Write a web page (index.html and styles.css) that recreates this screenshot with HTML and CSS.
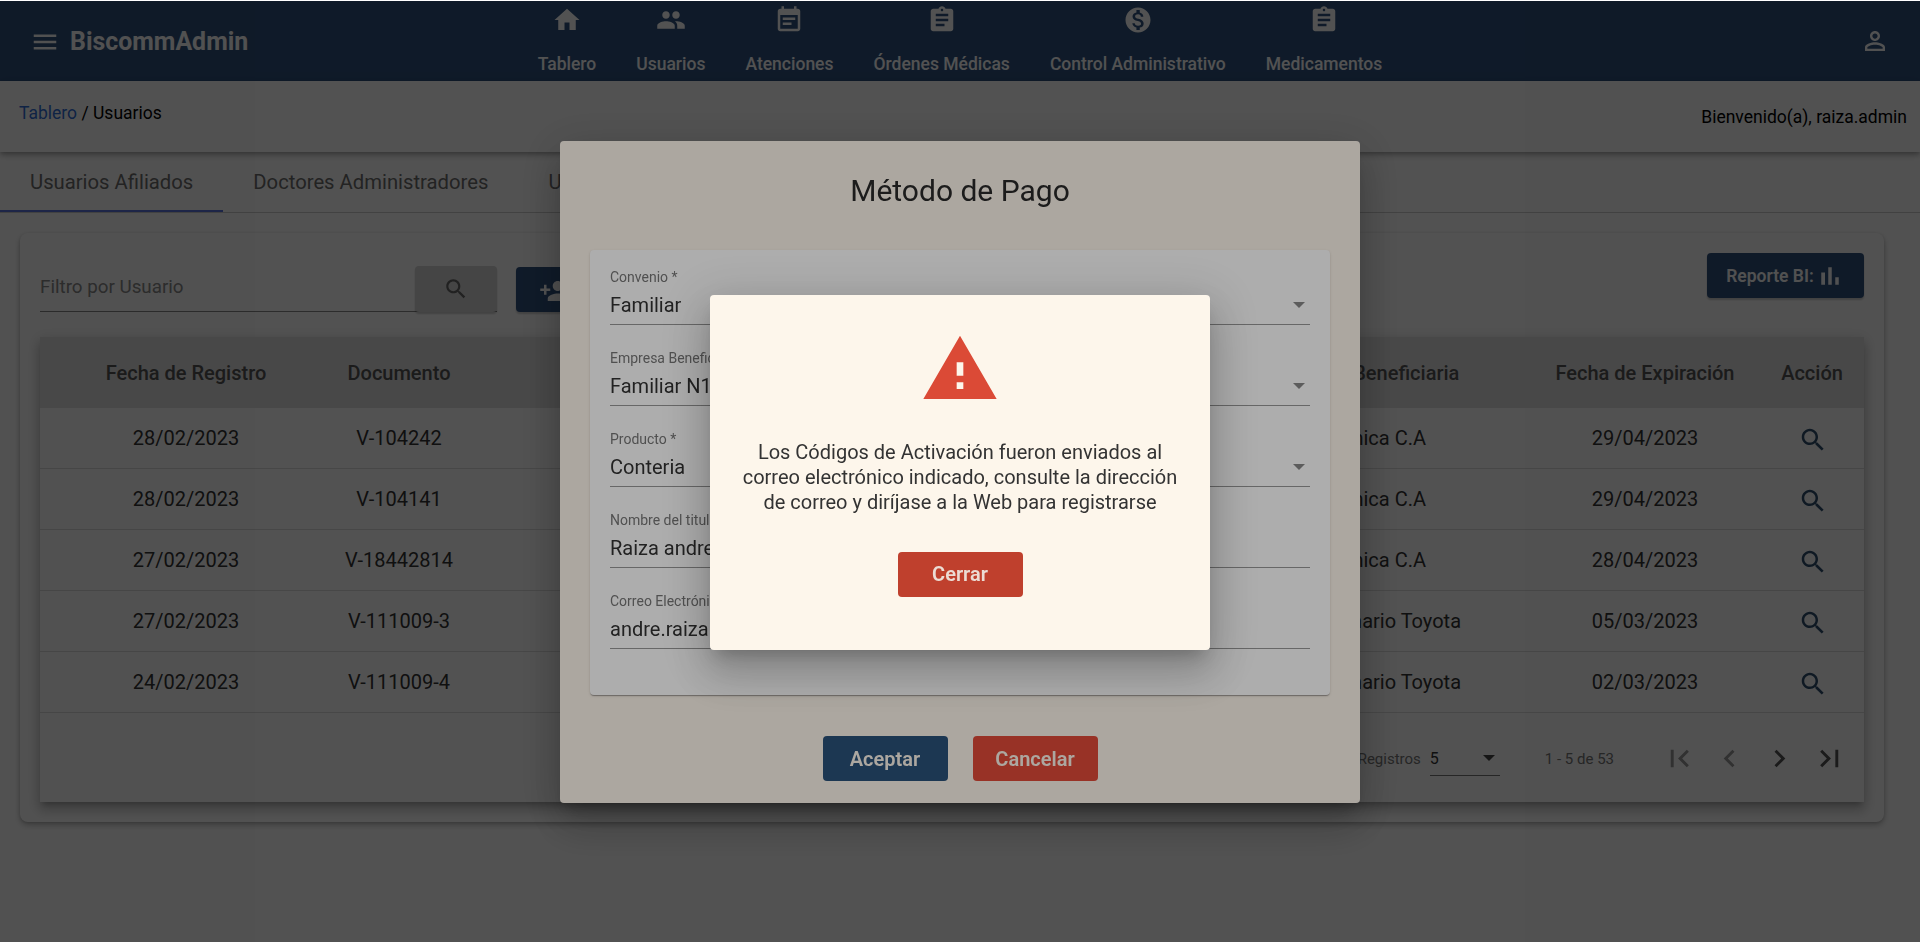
FILE: index.html
```html
<!DOCTYPE html>
<html lang="es">
<head>
<meta charset="utf-8">
<title>BiscommAdmin</title>
<link rel="stylesheet" href="styles.css">
</head>
<body>
<svg class="sprite" aria-hidden="true">
  <symbol id="i-menu" viewBox="0 0 24 24"><path d="M3 18h18v-2H3v2zm0-5h18v-2H3v2zm0-7v2h18V6H3z"/></symbol>
  <symbol id="i-home" viewBox="0 0 24 24"><path d="M10 20v-6h4v6h5v-8h3L12 3 2 12h3v8z"/></symbol>
  <symbol id="i-people" viewBox="0 0 24 24"><path d="M16 11c1.66 0 2.99-1.34 2.99-3S17.66 5 16 5c-1.66 0-3 1.34-3 3s1.34 3 3 3zm-8 0c1.66 0 2.99-1.34 2.99-3S9.66 5 8 5C6.34 5 5 6.34 5 8s1.34 3 3 3zm0 2c-2.33 0-7 1.17-7 3.5V19h14v-2.5c0-2.33-4.67-3.5-7-3.5zm8 0c-.29 0-.62.02-.97.05 1.16.84 1.97 1.97 1.97 3.45V19h6v-2.5c0-2.33-4.67-3.5-7-3.5z"/></symbol>
  <symbol id="i-event" viewBox="0 0 24 24"><path d="M17 10H7v2h10v-2zm2-7h-1V1h-2v2H8V1H6v2H5c-1.11 0-1.99.9-1.99 2L3 19c0 1.1.89 2 2 2h14c1.1 0 2-.9 2-2V5c0-1.1-.9-2-2-2zm0 16H5V8h14v11zm-5-5H7v2h7v-2z"/></symbol>
  <symbol id="i-assignment" viewBox="0 0 24 24"><path d="M19 3h-4.18C14.4 1.84 13.3 1 12 1c-1.3 0-2.4.84-2.82 2H5c-1.1 0-2 .9-2 2v14c0 1.1.9 2 2 2h14c1.1 0 2-.9 2-2V5c0-1.1-.9-2-2-2zm-7 0c.55 0 1 .45 1 1s-.45 1-1 1-1-.45-1-1 .45-1 1-1zm2 14H7v-2h7v2zm3-4H7v-2h10v2zm0-4H7V7h10v2z"/></symbol>
  <symbol id="i-money" viewBox="0 0 24 24"><path d="M12 2C6.48 2 2 6.48 2 12s4.48 10 10 10 10-4.48 10-10S17.52 2 12 2zm1.41 16.09V20h-2.67v-1.93c-1.71-.36-3.16-1.46-3.27-3.4h1.96c.1 1.05.82 1.87 2.65 1.87 1.96 0 2.4-.98 2.4-1.59 0-.83-.44-1.61-2.67-2.14-2.48-.6-4.18-1.62-4.18-3.67 0-1.72 1.39-2.84 3.11-3.21V4h2.67v1.95c1.86.45 2.79 1.86 2.85 3.39H14.3c-.05-1.11-.64-1.87-2.22-1.87-1.5 0-2.4.68-2.4 1.64 0 .84.65 1.39 2.67 1.91s4.18 1.39 4.18 3.91c-.01 1.83-1.38 2.83-3.12 3.16z"/></symbol>
  <symbol id="i-person" viewBox="0 0 24 24"><path d="M12 5.9c1.16 0 2.1.94 2.1 2.1s-.94 2.1-2.1 2.1S9.9 9.16 9.9 8s.94-2.1 2.1-2.1m0 9c2.97 0 6.1 1.46 6.1 2.1v1.1H5.9V17c0-.64 3.13-2.1 6.1-2.1M12 4C9.79 4 8 5.79 8 8s1.79 4 4 4 4-1.79 4-4-1.79-4-4-4zm0 9c-2.67 0-8 1.34-8 4v3h16v-3c0-2.66-5.33-4-8-4z"/></symbol>
  <symbol id="i-search" viewBox="0 0 24 24"><path d="M15.5 14h-.79l-.28-.27C15.41 12.59 16 11.11 16 9.5 16 5.91 13.09 3 9.5 3S3 5.91 3 9.5 5.91 16 9.5 16c1.61 0 3.09-.59 4.23-1.57l.27.28v.79l5 4.99L20.49 19l-4.99-5zm-6 0C7.01 14 5 11.99 5 9.5S7.01 5 9.5 5 14 7.01 14 9.5 11.99 14 9.5 14z"/></symbol>
  <symbol id="i-add" viewBox="0 0 24 24"><path d="M15 12c2.21 0 4-1.79 4-4s-1.79-4-4-4-4 1.79-4 4 1.79 4 4 4zm-9-2V7H4v3H1v2h3v3h2v-3h3v-2H6zm9 4c-2.67 0-8 1.34-8 4v2h16v-2c0-2.66-5.33-4-8-4z"/></symbol>
  <symbol id="i-bars" viewBox="0 0 24 24"><path d="M5 9.2h3V19H5zM10.6 5h2.8v14h-2.8zm5.6 8H19v6h-2.8z"/></symbol>
  <symbol id="i-first" viewBox="0 0 24 24"><path d="M18.41 16.59L13.82 12l4.59-4.59L17 6l-6 6 6 6zM6 6h2v12H6z"/></symbol>
  <symbol id="i-prev" viewBox="0 0 24 24"><path d="M15.41 7.41L14 6l-6 6 6 6 1.41-1.41L10.83 12z"/></symbol>
  <symbol id="i-next" viewBox="0 0 24 24"><path d="M10 6L8.59 7.41 13.17 12l-4.58 4.59L10 18l6-6z"/></symbol>
  <symbol id="i-last" viewBox="0 0 24 24"><path d="M5.59 7.41L10.18 12l-4.59 4.59L7 18l6-6-6-6zM16 6h2v12h-2z"/></symbol>
  <symbol id="i-warning" viewBox="0 0 24 24"><path d="M1 21h22L12 2 1 21zm12-3h-2v-2h2v2zm0-4h-2v-4h2v4z"/></symbol>
</svg>

<header class="topbar">
  <div class="brand">
    <svg class="icon brand-menu"><use href="#i-menu"/></svg>
    <span class="brand-name">BiscommAdmin</span>
  </div>
  <nav class="mainnav">
    <a class="navitem"><svg class="icon"><use href="#i-home"/></svg><span>Tablero</span></a>
    <a class="navitem"><svg class="icon"><use href="#i-people"/></svg><span>Usuarios</span></a>
    <a class="navitem"><svg class="icon"><use href="#i-event"/></svg><span>Atenciones</span></a>
    <a class="navitem"><svg class="icon"><use href="#i-assignment"/></svg><span>Órdenes Médicas</span></a>
    <a class="navitem"><svg class="icon"><use href="#i-money"/></svg><span>Control Administrativo</span></a>
    <a class="navitem"><svg class="icon"><use href="#i-assignment"/></svg><span>Medicamentos</span></a>
  </nav>
  <div class="account"><svg class="icon"><use href="#i-person"/></svg></div>
</header>

<div class="crumbbar">
  <div class="crumbs"><a class="crumb-link">Tablero</a> / Usuarios</div>
  <div class="welcome">Bienvenido(a), raiza.admin</div>
</div>

<div class="tabs">
  <div class="tab tab-active">Usuarios Afiliados</div>
  <div class="tab">Doctores Administradores</div>
  <div class="tab">Usuarios</div>
</div>

<main class="card">
  <div class="toolbar">
    <div class="toolbar-left">
      <div class="filter">
        <span class="filter-label">Filtro por Usuario</span>
        <button class="btn-search"><svg class="icon"><use href="#i-search"/></svg></button>
      </div>
      <button class="btn-add"><svg class="icon"><use href="#i-add"/></svg></button>
    </div>
    <button class="btn-report">Reporte BI: <svg class="icon"><use href="#i-bars"/></svg></button>
  </div>

  <div class="table">
    <div class="row row-head">
      <div>Fecha de Registro</div><div>Documento</div><div></div><div>Empresa Beneficiaria</div><div>Fecha de Expiración</div><div>Acción</div>
    </div>
    <div class="row">
      <div>28/02/2023</div><div>V-104242</div><div></div><div>Mecánica C.A</div><div>29/04/2023</div><div><svg class="icon row-search"><use href="#i-search"/></svg></div>
    </div>
    <div class="row">
      <div>28/02/2023</div><div>V-104141</div><div></div><div>Mecánica C.A</div><div>29/04/2023</div><div><svg class="icon row-search"><use href="#i-search"/></svg></div>
    </div>
    <div class="row">
      <div>27/02/2023</div><div>V-18442814</div><div></div><div>Mecánica C.A</div><div>28/04/2023</div><div><svg class="icon row-search"><use href="#i-search"/></svg></div>
    </div>
    <div class="row">
      <div>27/02/2023</div><div>V-111009-3</div><div></div><div>Concesionario Toyota</div><div>05/03/2023</div><div><svg class="icon row-search"><use href="#i-search"/></svg></div>
    </div>
    <div class="row">
      <div>24/02/2023</div><div>V-111009-4</div><div></div><div>Concesionario Toyota</div><div>02/03/2023</div><div><svg class="icon row-search"><use href="#i-search"/></svg></div>
    </div>
    <div class="paginator">
      <span class="page-label">Registros</span>
      <div class="page-select"><span>5</span><i class="caret caret-dark"></i></div>
      <span class="page-range">1 - 5 de 53</span>
      <svg class="icon page-btn page-off"><use href="#i-first"/></svg>
      <svg class="icon page-btn page-off"><use href="#i-prev"/></svg>
      <svg class="icon page-btn"><use href="#i-next"/></svg>
      <svg class="icon page-btn"><use href="#i-last"/></svg>
    </div>
  </div>
</main>

<div class="overlay overlay-first">
  <section class="dialog-pay">
    <h2 class="dialog-title">Método de Pago</h2>
    <div class="form-card">
      <div class="field"><label>Convenio *</label><div class="value">Familiar<i class="caret"></i></div></div>
      <div class="field"><label>Empresa Beneficiaria *</label><div class="value">Familiar N1<i class="caret"></i></div></div>
      <div class="field"><label>Producto *</label><div class="value">Conteria<i class="caret"></i></div></div>
      <div class="field"><label>Nombre del titular *</label><div class="value">Raiza andre</div></div>
      <div class="field"><label>Correo Electrónico *</label><div class="value">andre.raiza</div></div>
    </div>
    <div class="dialog-actions">
      <button class="btn btn-accept">Aceptar</button>
      <button class="btn btn-cancel">Cancelar</button>
    </div>
  </section>
</div>

<div class="overlay overlay-second">
  <section class="dialog-alert">
    <svg class="icon alert-icon"><use href="#i-warning"/></svg>
    <p class="alert-text">Los Códigos de Activación fueron enviados al correo electrónico indicado, consulte la dirección de correo y diríjase a la Web para registrarse</p>
    <button class="btn btn-close">Cerrar</button>
  </section>
</div>
</body>
</html>
```

FILE: styles.css
```css
* { box-sizing: border-box; }
html, body { margin: 0; height: 100%; overflow: hidden; }
body {
  padding-top: 1px;
  background: #fff;
  font-family: Roboto, "Liberation Sans", sans-serif;
  font-size: 17.5px;
  color: #333;
}
.sprite { display: none; }
.icon { display: block; width: 30px; height: 30px; fill: currentColor; flex: none; }
button { font-family: inherit; border: 0; cursor: pointer; }

/* top bar */
.topbar {
  height: 80px;
  background: #30537f;
  color: #fff;
  display: grid;
  grid-template-columns: 1fr auto 1fr;
}
.brand { display: flex; align-items: center; padding: 1px 0 0 30px; gap: 10px; height: 80px; }
.brand-name { font-size: 24.9px; font-weight: 700; color: #fff; }
.mainnav { display: flex; }
.navitem { display: flex; flex-direction: column; align-items: center; padding: 4px 20px 0; gap: 20px; font-weight: 500; }
.navitem span { line-height: 19px; }
.account { display: flex; justify-content: flex-end; align-items: center; padding-right: 30px; }

/* breadcrumb */
.crumbbar {
  position: relative;
  height: 71px;
  display: flex;
  justify-content: space-between;
  padding: 0 13px 0 19px;
  color: #000;
  background: #fff;
  box-shadow: 0 2px 4px -1px rgba(0,0,0,.2), 0 4px 5px rgba(0,0,0,.14), 0 1px 10px rgba(0,0,0,.12);
}
.crumbs { padding-top: 22px; line-height: 20px; }
.crumb-link { color: #2f6fd8; }
.welcome { padding-top: 26px; line-height: 20px; }

/* tabs */
.tabs { display: flex; height: 61px; border-bottom: 1px solid #ccc; }
.tab { padding: 2px 30px 0; display: flex; align-items: center; font-size: 20.25px; color: #6e6e6e; border-bottom: 2px solid transparent; height: 60px; }
.tab-active { border-bottom-color: #5c75e0; }

/* card */
.card {
  margin: 20px 36px 0 20px;
  height: 589px;
  padding: 20px;
  border-radius: 8px;
  background: #fff;
  box-shadow: 0 3px 6px rgba(0,0,0,.25), 0 1px 3px rgba(0,0,0,.12);
}
.toolbar { height: 84px; display: flex; justify-content: space-between; align-items: flex-start; }
.toolbar-left { display: flex; gap: 19px; margin-top: 13px; }
.filter { width: 457px; height: 46px; display: flex; justify-content: space-between; border-bottom: 1px solid #888; }
.filter-label { padding-top: 9px; line-height: 24px; font-size: 18.8px; color: #8a8a8a; }
.btn-search { width: 82px; height: 46px; background: #d5d5d5; border-radius: 4px; display: flex; align-items: center; justify-content: center; color: #666; box-shadow: 0 2px 2px rgba(0,0,0,.2); }
.btn-search .icon { width: 26px; height: 26px; }
.btn-add { width: 76px; height: 45px; margin-top: 1px; padding: 3px 0 0; background: #30537f; color: #fff; border-radius: 4px; display: flex; align-items: center; justify-content: center; box-shadow: 0 2px 2px rgba(0,0,0,.2); }
.btn-report { width: 157px; height: 45px; background: #30537f; color: #fff; border-radius: 4px; display: flex; align-items: center; justify-content: center; gap: 1px; font-size: 17.5px; font-weight: 600; box-shadow: 0 2px 2px rgba(0,0,0,.2); }

/* table */
.table { background: #fff; box-shadow: 0 5px 5px -3px rgba(0,0,0,.2), 0 8px 10px 1px rgba(0,0,0,.14), 0 3px 14px 2px rgba(0,0,0,.12); }
.row {
  display: grid;
  grid-template-columns: 292px 134px 733px 331px 230px 104px;
  height: 61px;
  align-items: center;
  text-align: center;
  font-size: 20px;
  color: #333;
  border-bottom: 1px solid #ddd;
}
.row-head { height: 71px; background: #e1e1e1; border-bottom: 0; font-weight: 500; color: #555; }
.row-search { margin: 0 auto; color: #2f5070; transform: translate(1px, 2px); }
.paginator { height: 89px; display: flex; justify-content: flex-end; align-items: center; padding: 2px 10px 0 0; font-size: 15px; color: #777; }
.page-label { margin-right: 9px; }
.page-select { width: 70px; height: 34px; border-bottom: 1px solid #777; display: flex; justify-content: space-between; align-items: center; padding-right: 5px; font-size: 16px; color: #333; }
.page-range { margin: 0 40px 0 45px; }
.page-btn { width: 35px; height: 35px; margin: 0 7.5px; color: #555; }
.page-off { color: #999; }
.caret { display: inline-block; width: 0; height: 0; border-left: 6px solid transparent; border-right: 6px solid transparent; border-top: 6px solid #888; }
.caret-dark { border-top-color: #444; }

/* overlays */
.overlay { position: fixed; left: 0; right: 0; top: 1px; bottom: 0; padding-top: 1px; display: flex; justify-content: center; align-items: center; }
.overlay-first { background: rgba(0,0,0,.53); }
.overlay-second { background: rgba(0,0,0,.32); }

/* payment dialog */
.dialog-pay {
  width: 800px;
  height: 662px;
  padding-top: 30px;
  background: #fef6ec;
  border-radius: 4px;
  box-shadow: 0 11px 15px -7px rgba(0,0,0,.2), 0 24px 38px 3px rgba(0,0,0,.14), 0 9px 46px 8px rgba(0,0,0,.12);
}
.dialog-title { margin: 0 0 39px; font-size: 30px; line-height: 40px; font-weight: 400; text-align: center; color: #2a2a2a; }
.form-card {
  margin: 0 30px;
  height: 445px;
  padding: 19px 20px 0;
  background: #fff;
  border-radius: 4px;
  display: flex;
  flex-direction: column;
  gap: 25px;
  box-shadow: 0 2px 1px -1px rgba(0,0,0,.2), 0 1px 1px rgba(0,0,0,.14), 0 1px 3px rgba(0,0,0,.12);
}
.field { height: 56px; border-bottom: 1px solid #999; }
.field label { display: block; font-size: 14px; line-height: 16px; color: #777; }
.value { display: flex; justify-content: space-between; align-items: center; margin-top: 8px; padding-right: 5px; font-size: 20px; line-height: 24px; color: #333; }
.dialog-actions { margin-top: 41px; display: flex; justify-content: center; gap: 25px; }
.btn { width: 125px; height: 45px; border-radius: 4px; font-size: 20px; font-weight: 600; color: #fef6ec; }
.btn-accept { background: #2a527a; }
.btn-cancel { background: #e04b39; }

/* alert dialog */
.dialog-alert {
  width: 500px;
  height: 355px;
  padding: 34px 30px 0;
  background: #fdf6eb;
  border-radius: 4px;
  display: flex;
  flex-direction: column;
  align-items: center;
  box-shadow: 0 11px 15px -7px rgba(0,0,0,.2), 0 24px 38px 3px rgba(0,0,0,.14), 0 9px 46px 8px rgba(0,0,0,.12);
}
.alert-icon { width: 80px; height: 80px; color: #db4a36; }
.alert-text { margin: 31px 0 37px; font-size: 20px; line-height: 25px; text-align: center; color: #333; }
.btn-close { background: #bf402d; color: #ecdcd4; }
```
